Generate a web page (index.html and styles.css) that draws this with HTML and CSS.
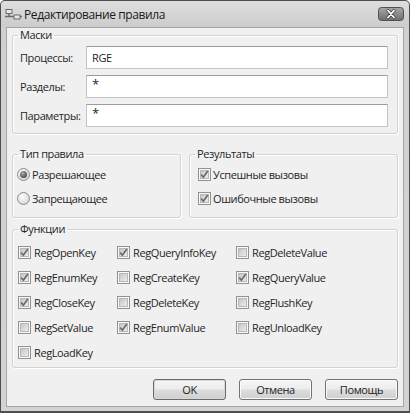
FILE: index.html
```html
<!DOCTYPE html>
<html lang="ru">
<head>
<meta charset="utf-8">
<title>Редактирование правила</title>
<link rel="stylesheet" href="styles.css">
</head>
<body>
<div class="window">
  <div class="titlebar">
    <svg class="app-icon" width="17" height="12" viewBox="0 0 17 12">
      <rect x="1" y="0.5" width="6" height="4" fill="#e8e8e8" stroke="#6a6a6a"/>
      <path d="M4 4.5 V7.5 M0 7.5 H17" stroke="#6a6a6a" stroke-width="1.4"/>
      <rect x="9" y="6" width="6" height="4" fill="#e8e8e8" stroke="#6a6a6a"/>
    </svg>
    <span class="title">Редактирование правила</span>
    <span class="close">
      <svg width="26" height="14" viewBox="0 0 26 14">
        <defs>
          <linearGradient id="cg" x1="0" y1="0" x2="0" y2="1">
            <stop offset="0" stop-color="#a8a8a8"/>
            <stop offset="0.5" stop-color="#8a8a8a"/>
            <stop offset="1" stop-color="#6e6e6e"/>
          </linearGradient>
        </defs>
        <rect x="0.5" y="0.5" width="25" height="13" rx="3" fill="url(#cg)" stroke="#505050"/>
        <path d="M10 3.5 L16 10.5 M16 3.5 L10 10.5" stroke="#3c3c3c" stroke-width="3.2" stroke-linecap="round"/>
        <path d="M10 3.5 L16 10.5 M16 3.5 L10 10.5" stroke="#ffffff" stroke-width="1.8" stroke-linecap="round"/>
      </svg>
    </span>
  </div>
  <div class="client">
    <fieldset class="group">
      <legend>Маски</legend>
      <div class="fields">
        <div class="field"><span class="label">Процессы:</span><span class="input">RGE</span></div>
        <div class="field"><span class="label">Разделы:</span><span class="input star">*</span></div>
        <div class="field"><span class="label">Параметры:</span><span class="input star">*</span></div>
      </div>
    </fieldset>

    <div class="row2">
      <fieldset class="group">
        <legend>Тип правила</legend>
        <div class="radios">
          <div class="item"><span class="radio on"><span class="dot"></span></span><span>Разрешающее</span></div>
          <div class="item"><span class="radio"></span><span>Запрещающее</span></div>
        </div>
      </fieldset>
      <fieldset class="group">
        <legend>Результаты</legend>
        <div class="checks">
          <div class="item"><span class="cb on"><svg width="9" height="9" viewBox="0 0 9 9"><path d="M1.2 4.6 L3.4 7.2 L7.8 1" fill="none" stroke="#6a6a6a" stroke-width="1.7"/></svg></span><span>Успешные вызовы</span></div>
          <div class="item"><span class="cb on"><svg width="9" height="9" viewBox="0 0 9 9"><path d="M1.2 4.6 L3.4 7.2 L7.8 1" fill="none" stroke="#6a6a6a" stroke-width="1.7"/></svg></span><span>Ошибочные вызовы</span></div>
        </div>
      </fieldset>
    </div>

    <fieldset class="group funcs">
      <legend>Функции</legend>
      <div class="grid">
        <div class="item"><span class="cb on"><svg width="9" height="9" viewBox="0 0 9 9"><path d="M1.2 4.6 L3.4 7.2 L7.8 1" fill="none" stroke="#6a6a6a" stroke-width="1.7"/></svg></span><span>RegOpenKey</span></div>
        <div class="item"><span class="cb on"><svg width="9" height="9" viewBox="0 0 9 9"><path d="M1.2 4.6 L3.4 7.2 L7.8 1" fill="none" stroke="#6a6a6a" stroke-width="1.7"/></svg></span><span>RegQueryInfoKey</span></div>
        <div class="item"><span class="cb"></span><span>RegDeleteValue</span></div>

        <div class="item"><span class="cb on"><svg width="9" height="9" viewBox="0 0 9 9"><path d="M1.2 4.6 L3.4 7.2 L7.8 1" fill="none" stroke="#6a6a6a" stroke-width="1.7"/></svg></span><span>RegEnumKey</span></div>
        <div class="item"><span class="cb"></span><span>RegCreateKey</span></div>
        <div class="item"><span class="cb on"><svg width="9" height="9" viewBox="0 0 9 9"><path d="M1.2 4.6 L3.4 7.2 L7.8 1" fill="none" stroke="#6a6a6a" stroke-width="1.7"/></svg></span><span>RegQueryValue</span></div>

        <div class="item"><span class="cb on"><svg width="9" height="9" viewBox="0 0 9 9"><path d="M1.2 4.6 L3.4 7.2 L7.8 1" fill="none" stroke="#6a6a6a" stroke-width="1.7"/></svg></span><span>RegCloseKey</span></div>
        <div class="item"><span class="cb"></span><span>RegDeleteKey</span></div>
        <div class="item"><span class="cb"></span><span>RegFlushKey</span></div>

        <div class="item"><span class="cb"></span><span>RegSetValue</span></div>
        <div class="item"><span class="cb on"><svg width="9" height="9" viewBox="0 0 9 9"><path d="M1.2 4.6 L3.4 7.2 L7.8 1" fill="none" stroke="#6a6a6a" stroke-width="1.7"/></svg></span><span>RegEnumValue</span></div>
        <div class="item"><span class="cb"></span><span>RegUnloadKey</span></div>

        <div class="item"><span class="cb"></span><span>RegLoadKey</span></div>
      </div>
    </fieldset>

    <div class="buttons">
      <span class="btn default">OK</span>
      <span class="btn">Отмена</span>
      <span class="btn">Помощь</span>
    </div>
  </div>
</div>
</body>
</html>
```

FILE: styles.css
```css
html, body {
  margin: 0;
  padding: 0;
  background: #ffffff;
}

body {
  font-family: "Open Sans", "Noto Sans", "DejaVu Sans", sans-serif;
  font-size: 11px;
  letter-spacing: -0.4px;
  color: #262626;
}

.window {
  width: 410px;
  height: 413px;
  box-sizing: border-box;
  border: 1px solid #4e4e4e;
  border-bottom-width: 2px;
  border-radius: 5px 5px 0 0;
  background: linear-gradient(to bottom, #dedede 0px, #cccccc 26px, #d0d0d0 27px, #d3d3d3 100%);
  padding: 0 5px 4px;
  display: flex;
  flex-direction: column;
}

.titlebar {
  height: 26px;
  display: flex;
  align-items: center;
  flex: none;
}

.app-icon {
  margin-left: -1px;
  margin-top: 1px;
}

.title {
  margin-left: 2px;
  font-size: 12px;
  color: #1a1a1a;
  flex: 1;
}

.close {
  display: flex;
  margin-top: -1px;
}

.client {
  flex: 1;
  background: #f0f0f0;
  border: 1px solid #a6a6a6;
  padding: 0 5px 5px;
  display: flex;
  flex-direction: column;
}

.group {
  margin: 0;
  padding: 0;
  min-width: 0;
  border: 1px solid #d2d2d2;
  border-radius: 3px;
  box-shadow: inset 1px 1px 0 #ffffff, 1px 1px 0 #ffffff;
}

.group legend {
  margin-left: 5px;
  padding: 0 2px;
  line-height: 14px;
}

.fields {
  padding: 4px 9px 6px 7px;
  display: flex;
  flex-direction: column;
  gap: 6px;
}

.field {
  display: flex;
  align-items: center;
  height: 23px;
}

.label {
  width: 66px;
  flex: none;
}

.input {
  flex: 1;
  height: 23px;
  box-sizing: border-box;
  border: 1px solid #c4c4c4;
  border-top-color: #9c9c9c;
  background: #ffffff;
  padding: 0 5px;
  line-height: 21px;
}

.input.star {
  font-size: 13px;
  line-height: 17px;
}

.row2 {
  margin-top: 13px;
  display: grid;
  grid-template-columns: 169px 1fr;
  gap: 8px;
}

.radios {
  padding: 1px 0 7px 4px;
}

.checks {
  padding: 1px 0 7px 8px;
}

.item {
  display: flex;
  align-items: center;
  gap: 2px;
  height: 24px;
  white-space: nowrap;
}

.radio {
  width: 13px;
  height: 13px;
  box-sizing: border-box;
  border-radius: 50%;
  border: 1px solid #8c8c8c;
  background: radial-gradient(circle at 40% 35%, #ffffff 0%, #e2e2e2 55%, #c8c8c8 100%);
  display: flex;
  align-items: center;
  justify-content: center;
  flex: none;
}

.radio .dot {
  width: 7px;
  height: 7px;
  border-radius: 50%;
  background: radial-gradient(circle at 40% 35%, #b0b0b0 0%, #5a5a5a 60%, #3e3e3e 100%);
}

.cb {
  width: 13px;
  height: 13px;
  box-sizing: border-box;
  border: 1px solid #929292;
  padding: 1px;
  background: #f8f8f8;
  display: flex;
  align-items: center;
  justify-content: center;
  flex: none;
  position: relative;
}

.cb::before {
  content: "";
  position: absolute;
  left: 1px;
  top: 1px;
  right: 1px;
  bottom: 1px;
  background: linear-gradient(135deg, #c4c4c4 0%, #dcdcdc 55%, #ececec 100%);
  border: 1px solid #b8b8b8;
  box-sizing: border-box;
}

.cb svg {
  position: relative;
}

.funcs {
  margin-top: 4px;
}

.grid {
  padding: 4px 0 2px 5px;
  display: grid;
  grid-template-columns: 99px 119px 1fr;
  grid-auto-rows: 25px;
}

.grid .item {
  height: 25px;
  gap: 3px;
}

.buttons {
  margin-top: 11px;
  display: flex;
  justify-content: flex-end;
  gap: 13px;
}

.btn {
  width: 73px;
  height: 21px;
  box-sizing: border-box;
  border: 1px solid #737373;
  border-radius: 3px;
  background: linear-gradient(to bottom, #f6f6f6 0%, #ececec 48%, #dddddd 52%, #cfcfcf 100%);
  box-shadow: inset 0 0 0 1px #fbfbfb;
  display: flex;
  align-items: center;
  justify-content: center;
  color: #1e1e1e;
}

.btn.default {
  border-color: #6a6a6a;
  box-shadow: inset 0 0 0 1px #d8d8d8;
}
```
